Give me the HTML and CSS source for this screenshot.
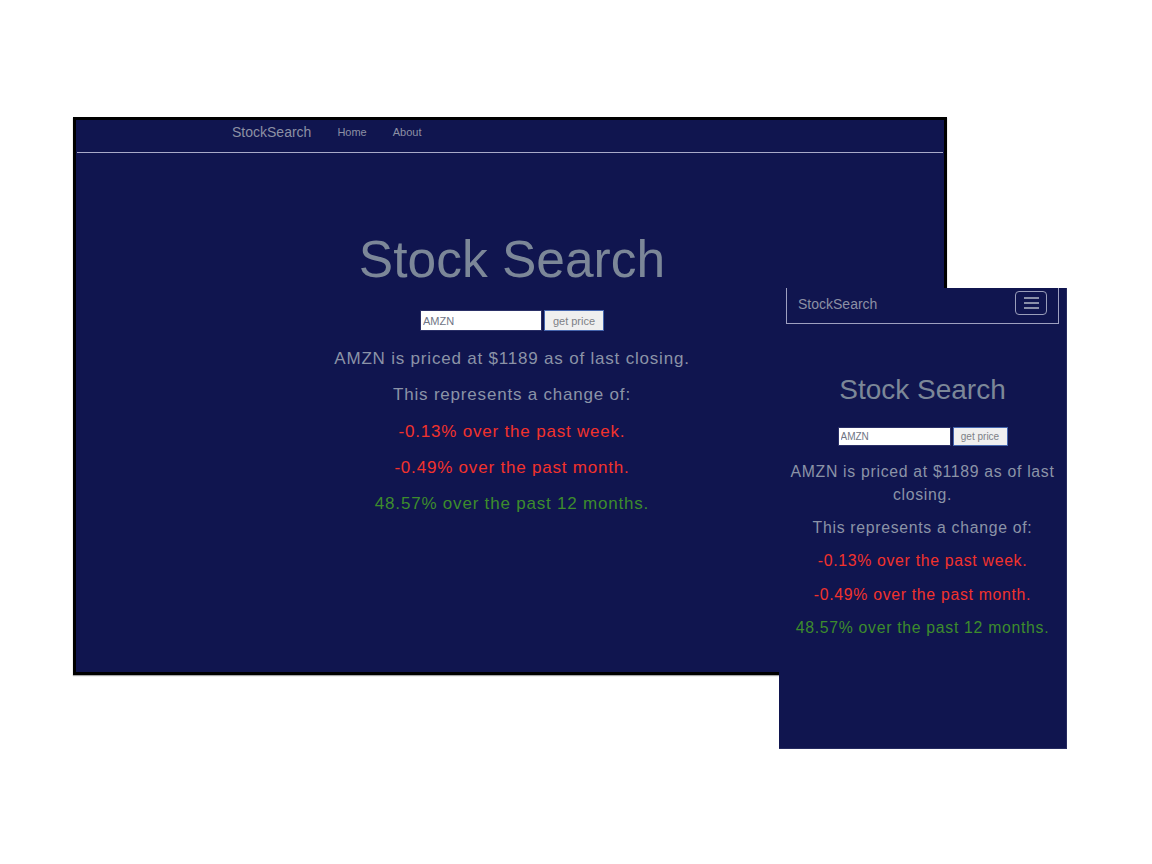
FILE: index.html
```html
<!DOCTYPE html>
<html lang="en">
<head>
<meta charset="utf-8">
<title>StockSearch</title>
<link rel="stylesheet" href="styles.css">
</head>
<body>
<div class="canvas">
  <div class="window desktop">
    <nav class="nav">
      <span class="brand">StockSearch</span>
      <a class="nav-link" href="#">Home</a>
      <a class="nav-link" href="#">About</a>
    </nav>
    <main class="content">
      <h1 class="title">Stock Search</h1>
      <form class="search">
        <input class="ticker" type="text" value="AMZN">
        <button class="go" type="button">get price</button>
      </form>
      <p class="line">AMZN is priced at $1189 as of last closing.</p>
      <p class="line">This represents a change of:</p>
      <p class="line down">-0.13% over the past week.</p>
      <p class="line down">-0.49% over the past month.</p>
      <p class="line up">48.57% over the past 12 months.</p>
    </main>
  </div>

  <div class="window mobile">
    <nav class="mnav">
      <span class="brand">StockSearch</span>
      <button class="burger" type="button" aria-label="menu">
        <span class="bar"></span><span class="bar"></span><span class="bar"></span>
      </button>
    </nav>
    <main class="mcontent">
      <h1 class="mtitle">Stock Search</h1>
      <form class="search msearch">
        <input class="ticker" type="text" value="AMZN">
        <button class="go" type="button">get price</button>
      </form>
      <p class="mline">AMZN is priced at $1189 as of last closing.</p>
      <p class="mline">This represents a change of:</p>
      <p class="mline down">-0.13% over the past week.</p>
      <p class="mline down">-0.49% over the past month.</p>
      <p class="mline up">48.57% over the past 12 months.</p>
    </main>
  </div>
</div>
</body>
</html>
```
FILE: styles.css
```css
html, body {
  margin: 0;
  padding: 0;
  background: #ffffff;
  font-family: "Liberation Sans", Arial, sans-serif;
}

.canvas {
  position: relative;
  width: 1152px;
  height: 864px;
}

.window {
  position: absolute;
  background: #10154f;
  box-sizing: border-box;
}

.desktop {
  left: 73px;
  top: 117px;
  width: 874px;
  height: 558px;
  border: 3px solid #000;
  box-shadow: 0 1px 1px rgba(0,0,0,0.35);
}

.mobile {
  left: 779px;
  top: 288px;
  width: 288px;
  height: 461px;
  border-right: 1px solid #262b60;
  border-bottom: 1px solid #262b60;
  display: flex;
  flex-direction: column;
}

.nav {
  box-sizing: border-box;
  height: 33px;
  margin: 0 1px;
  border-bottom: 1px solid #a9aac9;
  display: flex;
  align-items: center;
  padding: 0 0 9px 155px;
  gap: 26px;
}

.brand {
  color: #8c90a4;
  font-size: 14px;
}

.nav-link {
  color: #8c90a4;
  font-size: 11px;
  text-decoration: none;
}

.content {
  display: flex;
  flex-direction: column;
  align-items: center;
  padding: 75px 0 0 4px;
}

.title {
  margin: 0 0 19px;
  font-size: 51.5px;
  line-height: 63px;
  font-weight: normal;
  color: #7c8798;
}

.search {
  display: flex;
  gap: 2px;
  margin: 0 0 16px;
}

.ticker {
  box-sizing: border-box;
  width: 122px;
  height: 21px;
  margin: 0;
  padding: 0 2px;
  border: 1px solid #2a2f66;
  background: #fff;
  color: #6f7585;
  font-family: "Liberation Sans", Arial, sans-serif;
  font-size: 11px;
}

.go {
  box-sizing: border-box;
  width: 60px;
  height: 21px;
  margin: 0;
  padding: 0;
  border: 1px solid #4565ad;
  background: #efefef;
  color: #7d7f86;
  font-family: "Liberation Sans", Arial, sans-serif;
  font-size: 11px;
}

.line {
  margin: 0 0 12.25px;
  font-size: 17px;
  line-height: 24px;
  letter-spacing: 0.8px;
  color: #8b93a7;
  text-align: center;
}

/* mobile */
.mnav {
  box-sizing: border-box;
  height: 36px;
  margin: 0 7px;
  border: 1px solid #9ea0c0;
  border-top: none;
  display: flex;
  align-items: center;
  justify-content: space-between;
  padding: 0 11px 3px 11px;
}

.burger {
  box-sizing: border-box;
  width: 32px;
  height: 24px;
  margin-top: -2px;
  border: 1px solid #9a9eba;
  border-radius: 4px;
  background: transparent;
  padding: 0;
  display: flex;
  flex-direction: column;
  align-items: center;
  justify-content: center;
  gap: 3px;
}

.bar {
  display: block;
  width: 15px;
  height: 2px;
  background: #8a8fa8;
}

.mcontent {
  display: flex;
  flex-direction: column;
  align-items: center;
  padding: 49px 8px 0;
}

.mtitle {
  margin: 0 0 20px;
  font-size: 28px;
  line-height: 34px;
  font-weight: normal;
  color: #7c8798;
}

.msearch {
  margin-bottom: 14px;
}

.msearch .ticker {
  width: 113px;
  height: 19px;
  font-size: 10px;
}

.msearch .go {
  width: 55px;
  height: 19px;
  font-size: 10px;
}

.mline {
  margin: 0 0 10.2px;
  font-size: 15.8px;
  line-height: 23px;
  letter-spacing: 0.7px;
  color: #8b93a7;
  text-align: center;
}

.line.down, .mline.down { color: #f2322c; }
.line.up, .mline.up { color: #3d8c2c; }
```
